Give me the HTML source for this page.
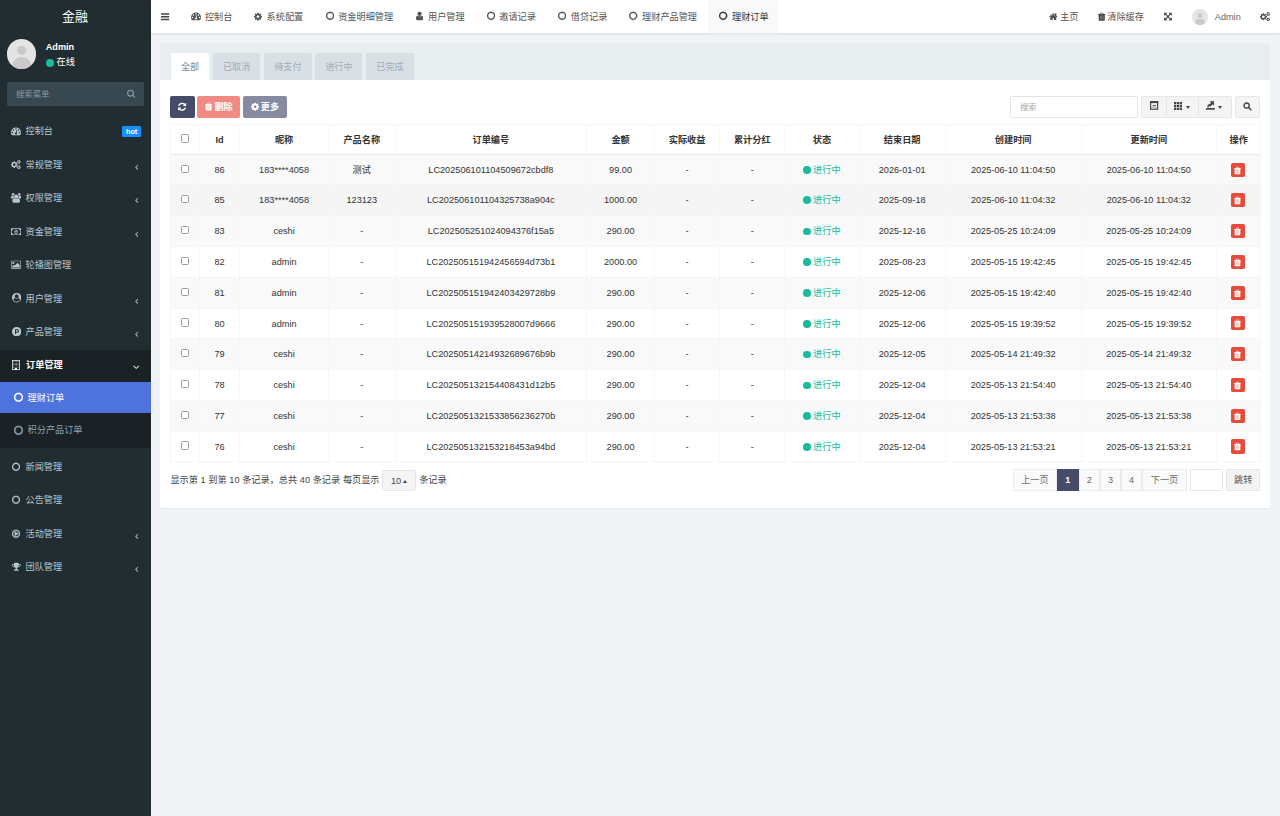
<!DOCTYPE html>
<html lang="zh-CN">
<head>
<meta charset="utf-8">
<title>金融</title>
<style>
*{box-sizing:border-box}
html,body{margin:0;padding:0}
body{width:1280px;height:816px;overflow:hidden;background:#f1f4f6;position:relative}
#page{position:absolute;left:0;top:0;width:1280px;height:816px;overflow:hidden;background:#f1f4f6;font-family:"Liberation Sans","Noto Sans CJK SC",sans-serif;font-size:9.16px;line-height:13px;color:#444}
svg{display:block}
/* sidebar */
#sidebar{position:absolute;left:0;top:0;width:150.8px;height:816px;background:#222d32;color:#b8c7ce}
#logo{position:absolute;left:0;top:0;width:150px;height:34px;line-height:33.5px;text-align:center;color:#fff;font-size:12.9px}
#avatar{position:absolute;left:6.5px;top:39.1px;width:29.5px;height:29.5px;border-radius:50%;background:#e4e4e4;overflow:hidden}
#uname{position:absolute;left:45.7px;top:41.25px;color:#fff;font-weight:bold;font-size:9.16px;line-height:13px}
#ustat{position:absolute;left:56.6px;top:55.8px;color:#fff;font-size:9.2px;line-height:13px}
#udot{position:absolute;left:45.75px;top:58.5px;width:8px;height:8px;border-radius:50%;background:#18bc9c}
#sform{position:absolute;left:6.5px;top:82px;width:137.5px;height:24px;background:#374850;border-radius:1.5px;color:#8a9aa3;font-size:8.4px;line-height:25px;padding-left:9.5px}
.mi{position:absolute;left:0;width:100%;height:33.43px;color:#b8c7ce;font-size:9.16px}
.mi .tx{position:absolute;left:25.5px;top:10.2px;line-height:13px;white-space:nowrap}
.mi.open{background:linear-gradient(to bottom,transparent 0.9px,#1a2226 0.9px);color:#fff;font-weight:bold}
.mi.open .tx{left:26px}
.sub{position:absolute;left:0;top:382.4px;width:100%;height:65.7px;background:#1a2226}
.si{position:absolute;left:0;width:100%;height:30.4px;color:#8aa4af;font-size:9.16px}
.si .tx{position:absolute;left:27.6px;top:9.2px;line-height:13px;white-space:nowrap}
.si.act{background:#4e73df;color:#fff}
#hot{position:absolute;left:122px;top:11.1px;width:19.3px;height:10.7px;background:#1890ff;border-radius:1.3px;color:#fff;font-weight:bold;font-size:7.2px;line-height:11.2px;text-align:center}
/* header */
#header{position:absolute;left:150.6px;top:0;width:1129.4px;height:33px;background:#fff;box-shadow:0 1px 3px rgba(0,21,41,.10)}
.tab{position:absolute;top:0;height:33px;color:#555;font-size:9.16px;line-height:32px;white-space:nowrap}
.tab.act{background:#f9f9f9;color:#333}
.tabt{position:absolute;top:10.5px;line-height:13px;color:#555;font-size:9.16px;white-space:nowrap}
/* panel */
#panel{position:absolute;left:160.2px;top:42.7px;width:1109.8px;height:465.5px;background:#fff;border-radius:2px;box-shadow:0 1px 1px rgba(0,0,0,.04)}
#phead{position:absolute;left:0;top:0;width:100%;height:37.1px;background:#e8edf0;border-radius:2px 2px 0 0}
.pt{position:absolute;top:10.5px;height:26.6px;line-height:29px;text-align:center;background:#d8dfe5;color:#a3adb5;font-size:9.16px;border-radius:2px 2px 0 0}
.pt.act{background:#fff;color:#7b8a8b}
.btn{position:absolute;border-radius:2px;color:#fff;font-size:9.16px;line-height:13px;white-space:nowrap;font-weight:bold}
.inp{position:absolute;border:1px solid #e4e4e4;border-radius:1.5px;background:#fff}
.bgrp{position:absolute;border:1px solid #e6e6e6;border-radius:1.5px;background:#f4f4f4;color:#444}
.bg1{position:absolute;top:-1px;height:21.4px;border-right:1px solid #e6e6e6}
.caret{position:absolute;width:0;height:0;border-left:2.6px solid transparent;border-right:2.6px solid transparent;border-top:3px solid #444}
.caret.up{border-top:0;border-bottom:3px solid #444}
/* table */
#tb{position:absolute;border-collapse:separate;border-spacing:0;table-layout:fixed;font-size:9.16px;color:#333;border-right:1px solid #f6f6f6;border-bottom:1px solid #f6f6f6}
#tb th,#tb td{border-left:1px solid #f6f6f6;border-top:1px solid #f6f6f6;text-align:center;padding:0;white-space:nowrap;overflow:hidden;position:relative}
#tb th{height:30.2px;font-weight:bold;color:#333;border-bottom:1.5px solid #ebebeb;padding-top:1.6px}
#tb td{height:30.78px;padding-top:1.2px}
#tb tbody tr:first-child td{height:29.38px;border-top:0;padding-top:2.4px}
#tb tbody tr.hov td{height:31.38px;padding-top:0.6px}
#tb tbody tr:nth-child(odd){background:#f9f9f9}
#tb tbody tr.hov{background:#f5f5f5}
.cb{display:inline-block;width:8.4px;height:8.4px;border:1px solid #9c9c9c;border-radius:1.6px;background:#fff;vertical-align:middle;position:relative;top:-1.7px}
.st{color:#18bc9c}
.dot{display:inline-block;width:7.6px;height:7.6px;border-radius:50%;background:#18bc9c;margin-right:2.2px;vertical-align:middle;position:relative;top:-0.4px}
.del{display:inline-block;position:relative;width:14px;height:14.2px;background:#e94b3a;border-radius:1.8px;vertical-align:middle;top:-0.7px;left:-0.9px}
.pg{position:absolute;top:426.3px;height:22.2px;line-height:20.4px;text-align:center;border:1px solid #ebebeb;margin-left:-1px;background:#fafafa;color:#6c6c6c}
.pg.act{background:#444c69;border-color:#444c69;color:#fff;font-weight:bold}

</style>
</head>
<body>
<div id="page">
<aside id="sidebar">
<div id="logo">金融</div>
<div id="avatar"><svg width="29.5" height="29.5" viewBox="0 0 30 30"><circle cx="15" cy="11.6" r="4.6" fill="#c9c9c9"/><ellipse cx="15" cy="27" rx="9.6" ry="8.6" fill="#c9c9c9"/></svg></div>
<div id="uname">Admin</div><div id="udot"></div><div id="ustat">在线</div>
<div id="sform">搜索菜单<svg width="8.36" height="9.00" viewBox="0 -1536 1664 1792" style="position:absolute;left:120.4px;top:7.1px"><path fill="#8a9aa3" transform="scale(1,-1)" d="M1152 704q0 185 -131.5 316.5t-316.5 131.5t-316.5 -131.5t-131.5 -316.5t131.5 -316.5t316.5 -131.5t316.5 131.5t131.5 316.5zM1664 -128q0 -52 -38 -90t-90 -38q-54 0 -90 38l-343 342q-179 -124 -399 -124q-143 0 -273.5 55.5t-225 150t-150 225t-55.5 273.5
t55.5 273.5t150 225t225 150t273.5 55.5t273.5 -55.5t225 -150t150 -225t55.5 -273.5q0 -220 -124 -399l343 -343q37 -37 37 -90z"/></svg></div>
<div class="mi" style="top:115.30px"><svg width="10.00" height="10.00" viewBox="0 -1536 1792 1792" style="position:absolute;left:11.20px;top:10.70px"><path fill="currentColor" transform="scale(1,-1)" d="M384 384q0 53 -37.5 90.5t-90.5 37.5t-90.5 -37.5t-37.5 -90.5t37.5 -90.5t90.5 -37.5t90.5 37.5t37.5 90.5zM576 832q0 53 -37.5 90.5t-90.5 37.5t-90.5 -37.5t-37.5 -90.5t37.5 -90.5t90.5 -37.5t90.5 37.5t37.5 90.5zM1004 351l101 382q6 26 -7.5 48.5t-38.5 29.5
t-48 -6.5t-30 -39.5l-101 -382q-60 -5 -107 -43.5t-63 -98.5q-20 -77 20 -146t117 -89t146 20t89 117q16 60 -6 117t-72 91zM1664 384q0 53 -37.5 90.5t-90.5 37.5t-90.5 -37.5t-37.5 -90.5t37.5 -90.5t90.5 -37.5t90.5 37.5t37.5 90.5zM1024 1024q0 53 -37.5 90.5
t-90.5 37.5t-90.5 -37.5t-37.5 -90.5t37.5 -90.5t90.5 -37.5t90.5 37.5t37.5 90.5zM1472 832q0 53 -37.5 90.5t-90.5 37.5t-90.5 -37.5t-37.5 -90.5t37.5 -90.5t90.5 -37.5t90.5 37.5t37.5 90.5zM1792 384q0 -261 -141 -483q-19 -29 -54 -29h-1402q-35 0 -54 29
q-141 221 -141 483q0 182 71 348t191 286t286 191t348 71t348 -71t286 -191t191 -286t71 -348z"/></svg><span class="tx">控制台</span>
<span id="hot">hot</span>
</div>
<div class="mi" style="top:148.73px"><svg width="9.86" height="9.20" viewBox="0 -1536 1920 1792" style="position:absolute;left:11.27px;top:11.10px"><path fill="currentColor" transform="scale(1,-1)" d="M896 640q0 106 -75 181t-181 75t-181 -75t-75 -181t75 -181t181 -75t181 75t75 181zM1664 128q0 52 -38 90t-90 38t-90 -38t-38 -90q0 -53 37.5 -90.5t90.5 -37.5t90.5 37.5t37.5 90.5zM1664 1152q0 52 -38 90t-90 38t-90 -38t-38 -90q0 -53 37.5 -90.5t90.5 -37.5
t90.5 37.5t37.5 90.5zM1280 731v-185q0 -10 -7 -19.5t-16 -10.5l-155 -24q-11 -35 -32 -76q34 -48 90 -115q7 -11 7 -20q0 -12 -7 -19q-23 -30 -82.5 -89.5t-78.5 -59.5q-11 0 -21 7l-115 90q-37 -19 -77 -31q-11 -108 -23 -155q-7 -24 -30 -24h-186q-11 0 -20 7.5t-10 17.5
l-23 153q-34 10 -75 31l-118 -89q-7 -7 -20 -7q-11 0 -21 8q-144 133 -144 160q0 9 7 19q10 14 41 53t47 61q-23 44 -35 82l-152 24q-10 1 -17 9.5t-7 19.5v185q0 10 7 19.5t16 10.5l155 24q11 35 32 76q-34 48 -90 115q-7 11 -7 20q0 12 7 20q22 30 82 89t79 59q11 0 21 -7
l115 -90q34 18 77 32q11 108 23 154q7 24 30 24h186q11 0 20 -7.5t10 -17.5l23 -153q34 -10 75 -31l118 89q8 7 20 7q11 0 21 -8q144 -133 144 -160q0 -8 -7 -19q-12 -16 -42 -54t-45 -60q23 -48 34 -82l152 -23q10 -2 17 -10.5t7 -19.5zM1920 198v-140q0 -16 -149 -31
q-12 -27 -30 -52q51 -113 51 -138q0 -4 -4 -7q-122 -71 -124 -71q-8 0 -46 47t-52 68q-20 -2 -30 -2t-30 2q-14 -21 -52 -68t-46 -47q-2 0 -124 71q-4 3 -4 7q0 25 51 138q-18 25 -30 52q-149 15 -149 31v140q0 16 149 31q13 29 30 52q-51 113 -51 138q0 4 4 7q4 2 35 20
t59 34t30 16q8 0 46 -46.5t52 -67.5q20 2 30 2t30 -2q51 71 92 112l6 2q4 0 124 -70q4 -3 4 -7q0 -25 -51 -138q17 -23 30 -52q149 -15 149 -31zM1920 1222v-140q0 -16 -149 -31q-12 -27 -30 -52q51 -113 51 -138q0 -4 -4 -7q-122 -71 -124 -71q-8 0 -46 47t-52 68
q-20 -2 -30 -2t-30 2q-14 -21 -52 -68t-46 -47q-2 0 -124 71q-4 3 -4 7q0 25 51 138q-18 25 -30 52q-149 15 -149 31v140q0 16 149 31q13 29 30 52q-51 113 -51 138q0 4 4 7q4 2 35 20t59 34t30 16q8 0 46 -46.5t52 -67.5q20 2 30 2t30 -2q51 71 92 112l6 2q4 0 124 -70
q4 -3 4 -7q0 -25 -51 -138q17 -23 30 -52q149 -15 149 -31z"/></svg><span class="tx">常规管理</span>
<svg width="3.57" height="10.00" viewBox="0 -1536 640 1792" style="position:absolute;left:134.7px;top:13.2px"><path fill="currentColor" stroke="currentColor" stroke-width="44" transform="scale(1,-1)" d="M627 992q0 -13 -10 -23l-393 -393l393 -393q10 -10 10 -23t-10 -23l-50 -50q-10 -10 -23 -10t-23 10l-466 466q-10 10 -10 23t10 23l466 466q10 10 23 10t23 -10l50 -50q10 -10 10 -23z"/></svg>
</div>
<div class="mi" style="top:182.16px"><svg width="10.39" height="9.70" viewBox="0 -1536 1920 1792" style="position:absolute;left:11.00px;top:10.85px"><path fill="currentColor" transform="scale(1,-1)" d="M593 640q-162 -5 -265 -128h-134q-82 0 -138 40.5t-56 118.5q0 353 124 353q6 0 43.5 -21t97.5 -42.5t119 -21.5q67 0 133 23q-5 -37 -5 -66q0 -139 81 -256zM1664 3q0 -120 -73 -189.5t-194 -69.5h-874q-121 0 -194 69.5t-73 189.5q0 53 3.5 103.5t14 109t26.5 108.5
t43 97.5t62 81t85.5 53.5t111.5 20q10 0 43 -21.5t73 -48t107 -48t135 -21.5t135 21.5t107 48t73 48t43 21.5q61 0 111.5 -20t85.5 -53.5t62 -81t43 -97.5t26.5 -108.5t14 -109t3.5 -103.5zM640 1280q0 -106 -75 -181t-181 -75t-181 75t-75 181t75 181t181 75t181 -75
t75 -181zM1344 896q0 -159 -112.5 -271.5t-271.5 -112.5t-271.5 112.5t-112.5 271.5t112.5 271.5t271.5 112.5t271.5 -112.5t112.5 -271.5zM1920 671q0 -78 -56 -118.5t-138 -40.5h-134q-103 123 -265 128q81 117 81 256q0 29 -5 66q66 -23 133 -23q59 0 119 21.5t97.5 42.5
t43.5 21q124 0 124 -353zM1792 1280q0 -106 -75 -181t-181 -75t-181 75t-75 181t75 181t181 75t181 -75t75 -181z"/></svg><span class="tx">权限管理</span>
<svg width="3.57" height="10.00" viewBox="0 -1536 640 1792" style="position:absolute;left:134.7px;top:13.2px"><path fill="currentColor" stroke="currentColor" stroke-width="44" transform="scale(1,-1)" d="M627 992q0 -13 -10 -23l-393 -393l393 -393q10 -10 10 -23t-10 -23l-50 -50q-10 -10 -23 -10t-23 10l-466 466q-10 10 -10 23t10 23l466 466q10 10 23 10t23 -10l50 -50q10 -10 10 -23z"/></svg>
</div>
<div class="mi" style="top:215.59px"><svg width="10.07" height="9.40" viewBox="0 -1536 1920 1792" style="position:absolute;left:11.16px;top:11.00px"><path fill="currentColor" transform="scale(1,-1)" d="M768 384h384v96h-128v448h-114l-148 -137l77 -80q42 37 55 57h2v-288h-128v-96zM1280 640q0 -70 -21 -142t-59.5 -134t-101.5 -101t-138 -39t-138 39t-101.5 101t-59.5 134t-21 142t21 142t59.5 134t101.5 101t138 39t138 -39t101.5 -101t59.5 -134t21 -142zM1792 384
v512q-106 0 -181 75t-75 181h-1152q0 -106 -75 -181t-181 -75v-512q106 0 181 -75t75 -181h1152q0 106 75 181t181 75zM1920 1216v-1152q0 -26 -19 -45t-45 -19h-1792q-26 0 -45 19t-19 45v1152q0 26 19 45t45 19h1792q26 0 45 -19t19 -45z"/></svg><span class="tx">资金管理</span>
<svg width="3.57" height="10.00" viewBox="0 -1536 640 1792" style="position:absolute;left:134.7px;top:13.2px"><path fill="currentColor" stroke="currentColor" stroke-width="44" transform="scale(1,-1)" d="M627 992q0 -13 -10 -23l-393 -393l393 -393q10 -10 10 -23t-10 -23l-50 -50q-10 -10 -23 -10t-23 10l-466 466q-10 10 -10 23t10 23l466 466q10 10 23 10t23 -10l50 -50q10 -10 10 -23z"/></svg>
</div>
<div class="mi" style="top:249.02px"><svg width="10.07" height="9.40" viewBox="0 -1536 1920 1792" style="position:absolute;left:11.16px;top:11.00px"><path fill="currentColor" transform="scale(1,-1)" d="M640 960q0 -80 -56 -136t-136 -56t-136 56t-56 136t56 136t136 56t136 -56t56 -136zM1664 576v-448h-1408v192l320 320l160 -160l512 512zM1760 1280h-1600q-13 0 -22.5 -9.5t-9.5 -22.5v-1216q0 -13 9.5 -22.5t22.5 -9.5h1600q13 0 22.5 9.5t9.5 22.5v1216
q0 13 -9.5 22.5t-22.5 9.5zM1920 1248v-1216q0 -66 -47 -113t-113 -47h-1600q-66 0 -113 47t-47 113v1216q0 66 47 113t113 47h1600q66 0 113 -47t47 -113z"/></svg><span class="tx">轮播图管理</span>
</div>
<div class="mi" style="top:282.45px"><svg width="9.40" height="9.40" viewBox="0 -1536 1792 1792" style="position:absolute;left:11.50px;top:11.00px"><path fill="currentColor" transform="scale(1,-1)" d="M1523 197q-22 155 -87.5 257.5t-184.5 118.5q-67 -74 -159.5 -115.5t-195.5 -41.5t-195.5 41.5t-159.5 115.5q-119 -16 -184.5 -118.5t-87.5 -257.5q106 -150 271 -237.5t356 -87.5t356 87.5t271 237.5zM1280 896q0 159 -112.5 271.5t-271.5 112.5t-271.5 -112.5
t-112.5 -271.5t112.5 -271.5t271.5 -112.5t271.5 112.5t112.5 271.5zM1792 640q0 -182 -71 -347.5t-190.5 -286t-285.5 -191.5t-349 -71q-182 0 -348 71t-286 191t-191 286t-71 348t71 348t191 286t286 191t348 71t348 -71t286 -191t191 -286t71 -348z"/></svg><span class="tx">用户管理</span>
<svg width="3.57" height="10.00" viewBox="0 -1536 640 1792" style="position:absolute;left:134.7px;top:13.2px"><path fill="currentColor" stroke="currentColor" stroke-width="44" transform="scale(1,-1)" d="M627 992q0 -13 -10 -23l-393 -393l393 -393q10 -10 10 -23t-10 -23l-50 -50q-10 -10 -23 -10t-23 10l-466 466q-10 10 -10 23t10 23l466 466q10 10 23 10t23 -10l50 -50q10 -10 10 -23z"/></svg>
</div>
<div class="mi" style="top:315.88px"><svg width="9.40" height="9.40" viewBox="0 -1536 1792 1792" style="position:absolute;left:11.50px;top:11.00px"><path fill="currentColor" transform="scale(1,-1)" d="M1150 774q0 -56 -39.5 -95t-95.5 -39h-253v269h253q56 0 95.5 -39.5t39.5 -95.5zM1329 774q0 130 -91.5 222t-222.5 92h-433v-896h180v269h253q130 0 222 91.5t92 221.5zM1792 640q0 -182 -71 -348t-191 -286t-286 -191t-348 -71t-348 71t-286 191t-191 286t-71 348
t71 348t191 286t286 191t348 71t348 -71t286 -191t191 -286t71 -348z"/></svg><span class="tx">产品管理</span>
<svg width="3.57" height="10.00" viewBox="0 -1536 640 1792" style="position:absolute;left:134.7px;top:13.2px"><path fill="currentColor" stroke="currentColor" stroke-width="44" transform="scale(1,-1)" d="M627 992q0 -13 -10 -23l-393 -393l393 -393q10 -10 10 -23t-10 -23l-50 -50q-10 -10 -23 -10t-23 10l-466 466q-10 10 -10 23t10 23l466 466q10 10 23 10t23 -10l50 -50q10 -10 10 -23z"/></svg>
</div>
<div class="mi open" style="top:349.31px"><svg width="7.78" height="9.90" viewBox="0 -1536 1408 1792" style="position:absolute;left:12.11px;top:10.75px"><path fill="currentColor" transform="scale(1,-1)" d="M384 224v-64q0 -13 -9.5 -22.5t-22.5 -9.5h-64q-13 0 -22.5 9.5t-9.5 22.5v64q0 13 9.5 22.5t22.5 9.5h64q13 0 22.5 -9.5t9.5 -22.5zM384 480v-64q0 -13 -9.5 -22.5t-22.5 -9.5h-64q-13 0 -22.5 9.5t-9.5 22.5v64q0 13 9.5 22.5t22.5 9.5h64q13 0 22.5 -9.5t9.5 -22.5z
M640 480v-64q0 -13 -9.5 -22.5t-22.5 -9.5h-64q-13 0 -22.5 9.5t-9.5 22.5v64q0 13 9.5 22.5t22.5 9.5h64q13 0 22.5 -9.5t9.5 -22.5zM384 736v-64q0 -13 -9.5 -22.5t-22.5 -9.5h-64q-13 0 -22.5 9.5t-9.5 22.5v64q0 13 9.5 22.5t22.5 9.5h64q13 0 22.5 -9.5t9.5 -22.5z
M1152 224v-64q0 -13 -9.5 -22.5t-22.5 -9.5h-64q-13 0 -22.5 9.5t-9.5 22.5v64q0 13 9.5 22.5t22.5 9.5h64q13 0 22.5 -9.5t9.5 -22.5zM896 480v-64q0 -13 -9.5 -22.5t-22.5 -9.5h-64q-13 0 -22.5 9.5t-9.5 22.5v64q0 13 9.5 22.5t22.5 9.5h64q13 0 22.5 -9.5t9.5 -22.5z
M640 736v-64q0 -13 -9.5 -22.5t-22.5 -9.5h-64q-13 0 -22.5 9.5t-9.5 22.5v64q0 13 9.5 22.5t22.5 9.5h64q13 0 22.5 -9.5t9.5 -22.5zM384 992v-64q0 -13 -9.5 -22.5t-22.5 -9.5h-64q-13 0 -22.5 9.5t-9.5 22.5v64q0 13 9.5 22.5t22.5 9.5h64q13 0 22.5 -9.5t9.5 -22.5z
M1152 480v-64q0 -13 -9.5 -22.5t-22.5 -9.5h-64q-13 0 -22.5 9.5t-9.5 22.5v64q0 13 9.5 22.5t22.5 9.5h64q13 0 22.5 -9.5t9.5 -22.5zM896 736v-64q0 -13 -9.5 -22.5t-22.5 -9.5h-64q-13 0 -22.5 9.5t-9.5 22.5v64q0 13 9.5 22.5t22.5 9.5h64q13 0 22.5 -9.5t9.5 -22.5z
M640 992v-64q0 -13 -9.5 -22.5t-22.5 -9.5h-64q-13 0 -22.5 9.5t-9.5 22.5v64q0 13 9.5 22.5t22.5 9.5h64q13 0 22.5 -9.5t9.5 -22.5zM384 1248v-64q0 -13 -9.5 -22.5t-22.5 -9.5h-64q-13 0 -22.5 9.5t-9.5 22.5v64q0 13 9.5 22.5t22.5 9.5h64q13 0 22.5 -9.5t9.5 -22.5z
M1152 736v-64q0 -13 -9.5 -22.5t-22.5 -9.5h-64q-13 0 -22.5 9.5t-9.5 22.5v64q0 13 9.5 22.5t22.5 9.5h64q13 0 22.5 -9.5t9.5 -22.5zM896 992v-64q0 -13 -9.5 -22.5t-22.5 -9.5h-64q-13 0 -22.5 9.5t-9.5 22.5v64q0 13 9.5 22.5t22.5 9.5h64q13 0 22.5 -9.5t9.5 -22.5z
M640 1248v-64q0 -13 -9.5 -22.5t-22.5 -9.5h-64q-13 0 -22.5 9.5t-9.5 22.5v64q0 13 9.5 22.5t22.5 9.5h64q13 0 22.5 -9.5t9.5 -22.5zM1152 992v-64q0 -13 -9.5 -22.5t-22.5 -9.5h-64q-13 0 -22.5 9.5t-9.5 22.5v64q0 13 9.5 22.5t22.5 9.5h64q13 0 22.5 -9.5t9.5 -22.5z
M896 1248v-64q0 -13 -9.5 -22.5t-22.5 -9.5h-64q-13 0 -22.5 9.5t-9.5 22.5v64q0 13 9.5 22.5t22.5 9.5h64q13 0 22.5 -9.5t9.5 -22.5zM1152 1248v-64q0 -13 -9.5 -22.5t-22.5 -9.5h-64q-13 0 -22.5 9.5t-9.5 22.5v64q0 13 9.5 22.5t22.5 9.5h64q13 0 22.5 -9.5t9.5 -22.5z
M896 -128h384v1536h-1152v-1536h384v224q0 13 9.5 22.5t22.5 9.5h320q13 0 22.5 -9.5t9.5 -22.5v-224zM1408 1472v-1664q0 -26 -19 -45t-45 -19h-1280q-26 0 -45 19t-19 45v1664q0 26 19 45t45 19h1280q26 0 45 -19t19 -45z"/></svg><span class="tx">订单管理</span>
<svg width="6.43" height="10.00" viewBox="0 -1536 1152 1792" style="position:absolute;left:133.3px;top:13.2px"><path fill="currentColor" stroke="currentColor" stroke-width="44" transform="scale(1,-1)" d="M1075 800q0 -13 -10 -23l-466 -466q-10 -10 -23 -10t-23 10l-466 466q-10 10 -10 23t10 23l50 50q10 10 23 10t23 -10l393 -393l393 393q10 10 23 10t23 -10l50 -50q10 -10 10 -23z"/></svg>
</div>
<div class="sub">
<div class="si act" style="top:0"><svg width="9.00" height="10.50" viewBox="0 -1536 1536 1792" style="position:absolute;left:13.7px;top:9.5px"><path fill="currentColor" stroke="currentColor" stroke-width="44" transform="scale(1,-1)" d="M768 1184q-148 0 -273 -73t-198 -198t-73 -273t73 -273t198 -198t273 -73t273 73t198 198t73 273t-73 273t-198 198t-273 73zM1536 640q0 -209 -103 -385.5t-279.5 -279.5t-385.5 -103t-385.5 103t-279.5 279.5t-103 385.5t103 385.5t279.5 279.5t385.5 103t385.5 -103
t279.5 -279.5t103 -385.5z"/></svg><span class="tx">理财订单</span></div>
<div class="si" style="top:32.8px"><svg width="9.00" height="10.50" viewBox="0 -1536 1536 1792" style="position:absolute;left:13.7px;top:9.5px"><path fill="currentColor" stroke="currentColor" stroke-width="44" transform="scale(1,-1)" d="M768 1184q-148 0 -273 -73t-198 -198t-73 -273t73 -273t198 -198t273 -73t273 73t198 198t73 273t-73 273t-198 198t-273 73zM1536 640q0 -209 -103 -385.5t-279.5 -279.5t-385.5 -103t-385.5 103t-279.5 279.5t-103 385.5t103 385.5t279.5 279.5t385.5 103t385.5 -103
t279.5 -279.5t103 -385.5z"/></svg><span class="tx">积分产品订单</span></div>
</div>
<div class="mi" style="top:450.70px"><svg width="8.06" height="9.40" viewBox="0 -1536 1536 1792" style="position:absolute;left:12.17px;top:11.0px"><path fill="currentColor" stroke="currentColor" stroke-width="44" transform="scale(1,-1)" d="M768 1184q-148 0 -273 -73t-198 -198t-73 -273t73 -273t198 -198t273 -73t273 73t198 198t73 273t-73 273t-198 198t-273 73zM1536 640q0 -209 -103 -385.5t-279.5 -279.5t-385.5 -103t-385.5 103t-279.5 279.5t-103 385.5t103 385.5t279.5 279.5t385.5 103t385.5 -103
t279.5 -279.5t103 -385.5z"/></svg><span class="tx">新闻管理</span>
</div>
<div class="mi" style="top:484.13px"><svg width="8.06" height="9.40" viewBox="0 -1536 1536 1792" style="position:absolute;left:12.17px;top:11.0px"><path fill="currentColor" stroke="currentColor" stroke-width="44" transform="scale(1,-1)" d="M768 1184q-148 0 -273 -73t-198 -198t-73 -273t73 -273t198 -198t273 -73t273 73t198 198t73 273t-73 273t-198 198t-273 73zM1536 640q0 -209 -103 -385.5t-279.5 -279.5t-385.5 -103t-385.5 103t-279.5 279.5t-103 385.5t103 385.5t279.5 279.5t385.5 103t385.5 -103
t279.5 -279.5t103 -385.5z"/></svg><span class="tx">公告管理</span>
</div>
<div class="mi" style="top:517.56px"><svg width="8.06" height="9.40" viewBox="0 -1536 1536 1792" style="position:absolute;left:12.17px;top:11.0px"><path fill="currentColor" stroke="currentColor" stroke-width="44" transform="scale(1,-1)" d="M1184 640q0 -37 -32 -55l-544 -320q-15 -9 -32 -9q-16 0 -32 8q-32 19 -32 56v640q0 37 32 56q33 18 64 -1l544 -320q32 -18 32 -55zM1312 640q0 148 -73 273t-198 198t-273 73t-273 -73t-198 -198t-73 -273t73 -273t198 -198t273 -73t273 73t198 198t73 273zM1536 640
q0 -209 -103 -385.5t-279.5 -279.5t-385.5 -103t-385.5 103t-279.5 279.5t-103 385.5t103 385.5t279.5 279.5t385.5 103t385.5 -103t279.5 -279.5t103 -385.5z"/></svg><span class="tx">活动管理</span>
<svg width="3.57" height="10.00" viewBox="0 -1536 640 1792" style="position:absolute;left:134.7px;top:13.2px"><path fill="currentColor" stroke="currentColor" stroke-width="44" transform="scale(1,-1)" d="M627 992q0 -13 -10 -23l-393 -393l393 -393q10 -10 10 -23t-10 -23l-50 -50q-10 -10 -23 -10t-23 10l-466 466q-10 10 -10 23t10 23l466 466q10 10 23 10t23 -10l50 -50q10 -10 10 -23z"/></svg>
</div>
<div class="mi" style="top:550.99px"><svg width="8.73" height="9.40" viewBox="0 -1536 1664 1792" style="position:absolute;left:11.84px;top:11.0px"><path fill="currentColor" transform="scale(1,-1)" d="M458 653q-74 162 -74 371h-256v-96q0 -78 94.5 -162t235.5 -113zM1536 928v96h-256q0 -209 -74 -371q141 29 235.5 113t94.5 162zM1664 1056v-128q0 -71 -41.5 -143t-112 -130t-173 -97.5t-215.5 -44.5q-42 -54 -95 -95q-38 -34 -52.5 -72.5t-14.5 -89.5q0 -54 30.5 -91
t97.5 -37q75 0 133.5 -45.5t58.5 -114.5v-64q0 -14 -9 -23t-23 -9h-832q-14 0 -23 9t-9 23v64q0 69 58.5 114.5t133.5 45.5q67 0 97.5 37t30.5 91q0 51 -14.5 89.5t-52.5 72.5q-53 41 -95 95q-113 5 -215.5 44.5t-173 97.5t-112 130t-41.5 143v128q0 40 28 68t68 28h288v96
q0 66 47 113t113 47h576q66 0 113 -47t47 -113v-96h288q40 0 68 -28t28 -68z"/></svg><span class="tx">团队管理</span>
<svg width="3.57" height="10.00" viewBox="0 -1536 640 1792" style="position:absolute;left:134.7px;top:13.2px"><path fill="currentColor" stroke="currentColor" stroke-width="44" transform="scale(1,-1)" d="M627 992q0 -13 -10 -23l-393 -393l393 -393q10 -10 10 -23t-10 -23l-50 -50q-10 -10 -23 -10t-23 10l-466 466q-10 10 -10 23t10 23l466 466q10 10 23 10t23 -10l50 -50q10 -10 10 -23z"/></svg>
</div>
</aside>
<header id="header">
<svg width="8.23" height="9.60" viewBox="0 -1536 1536 1792" style="position:absolute;left:10.7px;top:11.9px"><path fill="#444" transform="scale(1,-1)" d="M1536 192v-128q0 -26 -19 -45t-45 -19h-1408q-26 0 -45 19t-19 45v128q0 26 19 45t45 19h1408q26 0 45 -19t19 -45zM1536 704v-128q0 -26 -19 -45t-45 -19h-1408q-26 0 -45 19t-19 45v128q0 26 19 45t45 19h1408q26 0 45 -19t19 -45zM1536 1216v-128q0 -26 -19 -45
t-45 -19h-1408q-26 0 -45 19t-19 45v128q0 26 19 45t45 19h1408q26 0 45 -19t19 -45z"/></svg>
<div class="tab act" style="left:557.3px;width:70.7px"></div>
<svg width="10.00" height="10.00" viewBox="0 -1536 1792 1792" style="position:absolute;left:40.80px;top:11.40px"><path fill="#555" transform="scale(1,-1)" d="M384 384q0 53 -37.5 90.5t-90.5 37.5t-90.5 -37.5t-37.5 -90.5t37.5 -90.5t90.5 -37.5t90.5 37.5t37.5 90.5zM576 832q0 53 -37.5 90.5t-90.5 37.5t-90.5 -37.5t-37.5 -90.5t37.5 -90.5t90.5 -37.5t90.5 37.5t37.5 90.5zM1004 351l101 382q6 26 -7.5 48.5t-38.5 29.5
t-48 -6.5t-30 -39.5l-101 -382q-60 -5 -107 -43.5t-63 -98.5q-20 -77 20 -146t117 -89t146 20t89 117q16 60 -6 117t-72 91zM1664 384q0 53 -37.5 90.5t-90.5 37.5t-90.5 -37.5t-37.5 -90.5t37.5 -90.5t90.5 -37.5t90.5 37.5t37.5 90.5zM1024 1024q0 53 -37.5 90.5
t-90.5 37.5t-90.5 -37.5t-37.5 -90.5t37.5 -90.5t90.5 -37.5t90.5 37.5t37.5 90.5zM1472 832q0 53 -37.5 90.5t-90.5 37.5t-90.5 -37.5t-37.5 -90.5t37.5 -90.5t90.5 -37.5t90.5 37.5t37.5 90.5zM1792 384q0 -261 -141 -483q-19 -29 -54 -29h-1402q-35 0 -54 29
q-141 221 -141 483q0 182 71 348t191 286t286 191t348 71t348 -71t286 -191t191 -286t71 -348z"/></svg>
<span class="tabt" style="left:54.30px;color:#555">控制台</span>
<svg width="7.97" height="9.30" viewBox="0 -1536 1536 1792" style="position:absolute;left:103.51px;top:11.75px"><path fill="#555" transform="scale(1,-1)" d="M1024 640q0 106 -75 181t-181 75t-181 -75t-75 -181t75 -181t181 -75t181 75t75 181zM1536 749v-222q0 -12 -8 -23t-20 -13l-185 -28q-19 -54 -39 -91q35 -50 107 -138q10 -12 10 -25t-9 -23q-27 -37 -99 -108t-94 -71q-12 0 -26 9l-138 108q-44 -23 -91 -38
q-16 -136 -29 -186q-7 -28 -36 -28h-222q-14 0 -24.5 8.5t-11.5 21.5l-28 184q-49 16 -90 37l-141 -107q-10 -9 -25 -9q-14 0 -25 11q-126 114 -165 168q-7 10 -7 23q0 12 8 23q15 21 51 66.5t54 70.5q-27 50 -41 99l-183 27q-13 2 -21 12.5t-8 23.5v222q0 12 8 23t19 13
l186 28q14 46 39 92q-40 57 -107 138q-10 12 -10 24q0 10 9 23q26 36 98.5 107.5t94.5 71.5q13 0 26 -10l138 -107q44 23 91 38q16 136 29 186q7 28 36 28h222q14 0 24.5 -8.5t11.5 -21.5l28 -184q49 -16 90 -37l142 107q9 9 24 9q13 0 25 -10q129 -119 165 -170q7 -8 7 -22
q0 -12 -8 -23q-15 -21 -51 -66.5t-54 -70.5q26 -50 41 -98l183 -28q13 -2 21 -12.5t8 -23.5z"/></svg>
<span class="tabt" style="left:116.00px;color:#555">系统配置</span>
<svg width="8.23" height="9.60" viewBox="0 -1536 1536 1792" style="position:absolute;left:174.99px;top:11.00px"><path fill="#555" stroke="#555" stroke-width="44" transform="scale(1,-1)" d="M768 1184q-148 0 -273 -73t-198 -198t-73 -273t73 -273t198 -198t273 -73t273 73t198 198t73 273t-73 273t-198 198t-273 73zM1536 640q0 -209 -103 -385.5t-279.5 -279.5t-385.5 -103t-385.5 103t-279.5 279.5t-103 385.5t103 385.5t279.5 279.5t385.5 103t385.5 -103
t279.5 -279.5t103 -385.5z"/></svg>
<span class="tabt" style="left:187.60px;color:#555">资金明细管理</span>
<svg width="7.14" height="10.00" viewBox="0 -1536 1280 1792" style="position:absolute;left:265.33px;top:11.40px"><path fill="#555" transform="scale(1,-1)" d="M1280 137q0 -109 -62.5 -187t-150.5 -78h-854q-88 0 -150.5 78t-62.5 187q0 85 8.5 160.5t31.5 152t58.5 131t94 89t134.5 34.5q131 -128 313 -128t313 128q76 0 134.5 -34.5t94 -89t58.5 -131t31.5 -152t8.5 -160.5zM1024 1024q0 -159 -112.5 -271.5t-271.5 -112.5
t-271.5 112.5t-112.5 271.5t112.5 271.5t271.5 112.5t271.5 -112.5t112.5 -271.5z"/></svg>
<span class="tabt" style="left:277.40px;color:#555">用户管理</span>
<svg width="8.23" height="9.60" viewBox="0 -1536 1536 1792" style="position:absolute;left:336.09px;top:11.00px"><path fill="#555" stroke="#555" stroke-width="44" transform="scale(1,-1)" d="M768 1184q-148 0 -273 -73t-198 -198t-73 -273t73 -273t198 -198t273 -73t273 73t198 198t73 273t-73 273t-198 198t-273 73zM1536 640q0 -209 -103 -385.5t-279.5 -279.5t-385.5 -103t-385.5 103t-279.5 279.5t-103 385.5t103 385.5t279.5 279.5t385.5 103t385.5 -103
t279.5 -279.5t103 -385.5z"/></svg>
<span class="tabt" style="left:348.70px;color:#555">邀请记录</span>
<svg width="8.23" height="9.60" viewBox="0 -1536 1536 1792" style="position:absolute;left:407.59px;top:11.00px"><path fill="#555" stroke="#555" stroke-width="44" transform="scale(1,-1)" d="M768 1184q-148 0 -273 -73t-198 -198t-73 -273t73 -273t198 -198t273 -73t273 73t198 198t73 273t-73 273t-198 198t-273 73zM1536 640q0 -209 -103 -385.5t-279.5 -279.5t-385.5 -103t-385.5 103t-279.5 279.5t-103 385.5t103 385.5t279.5 279.5t385.5 103t385.5 -103
t279.5 -279.5t103 -385.5z"/></svg>
<span class="tabt" style="left:420.20px;color:#555">借贷记录</span>
<svg width="8.23" height="9.60" viewBox="0 -1536 1536 1792" style="position:absolute;left:478.89px;top:11.00px"><path fill="#555" stroke="#555" stroke-width="44" transform="scale(1,-1)" d="M768 1184q-148 0 -273 -73t-198 -198t-73 -273t73 -273t198 -198t273 -73t273 73t198 198t73 273t-73 273t-198 198t-273 73zM1536 640q0 -209 -103 -385.5t-279.5 -279.5t-385.5 -103t-385.5 103t-279.5 279.5t-103 385.5t103 385.5t279.5 279.5t385.5 103t385.5 -103
t279.5 -279.5t103 -385.5z"/></svg>
<span class="tabt" style="left:491.50px;color:#555">理财产品管理</span>
<svg width="8.23" height="9.60" viewBox="0 -1536 1536 1792" style="position:absolute;left:568.79px;top:11.00px"><path fill="#333" stroke="#333" stroke-width="44" transform="scale(1,-1)" d="M768 1184q-148 0 -273 -73t-198 -198t-73 -273t73 -273t198 -198t273 -73t273 73t198 198t73 273t-73 273t-198 198t-273 73zM1536 640q0 -209 -103 -385.5t-279.5 -279.5t-385.5 -103t-385.5 103t-279.5 279.5t-103 385.5t103 385.5t279.5 279.5t385.5 103t385.5 -103
t279.5 -279.5t103 -385.5z"/></svg>
<span class="tabt" style="left:581.40px;color:#333">理财订单</span>
<svg width="8.64" height="9.30" viewBox="0 -1536 1664 1792" style="position:absolute;left:898.4px;top:11.8px"><path fill="#4a4a4a" transform="scale(1,-1)" d="M1408 544v-480q0 -26 -19 -45t-45 -19h-384v384h-256v-384h-384q-26 0 -45 19t-19 45v480q0 1 0.5 3t0.5 3l575 474l575 -474q1 -2 1 -6zM1631 613l-62 -74q-8 -9 -21 -11h-3q-13 0 -21 7l-692 577l-692 -577q-12 -8 -24 -7q-13 2 -21 11l-62 74q-8 10 -7 23.5t11 21.5
l719 599q32 26 76 26t76 -26l244 -204v195q0 14 9 23t23 9h192q14 0 23 -9t9 -23v-408l219 -182q10 -8 11 -21.5t-7 -23.5z"/></svg><span class="tabt" style="left:909.6px">主页</span>
<svg width="7.46" height="9.50" viewBox="0 -1536 1408 1792" style="position:absolute;left:947.6px;top:11.8px"><rect x="256" y="-1024" width="896" height="1024" fill="#444" fill-opacity="0.6"/><path fill="#444" transform="scale(1,-1)" d="M512 160v704q0 14 -9 23t-23 9h-64q-14 0 -23 -9t-9 -23v-704q0 -14 9 -23t23 -9h64q14 0 23 9t9 23zM768 160v704q0 14 -9 23t-23 9h-64q-14 0 -23 -9t-9 -23v-704q0 -14 9 -23t23 -9h64q14 0 23 9t9 23zM1024 160v704q0 14 -9 23t-23 9h-64q-14 0 -23 -9t-9 -23v-704
q0 -14 9 -23t23 -9h64q14 0 23 9t9 23zM480 1152h448l-48 117q-7 9 -17 11h-317q-10 -2 -17 -11zM1408 1120v-64q0 -14 -9 -23t-23 -9h-96v-948q0 -83 -47 -143.5t-113 -60.5h-832q-66 0 -113 58.5t-47 141.5v952h-96q-14 0 -23 9t-9 23v64q0 14 9 23t23 9h309l70 167
q15 37 54 63t79 26h320q40 0 79 -26t54 -63l70 -167h309q14 0 23 -9t9 -23z"/></svg><span class="tabt" style="left:956.7px">清除缓存</span>
<svg width="7.89" height="9.20" viewBox="0 -1536 1536 1792" style="position:absolute;left:1013.6px;top:11.9px"><path fill="#4a4a4a" transform="scale(1,-1)" d="M1283 995l-355 -355l355 -355l144 144q29 31 70 14q39 -17 39 -59v-448q0 -26 -19 -45t-45 -19h-448q-42 0 -59 40q-17 39 14 69l144 144l-355 355l-355 -355l144 -144q31 -30 14 -69q-17 -40 -59 -40h-448q-26 0 -45 19t-19 45v448q0 42 40 59q39 17 69 -14l144 -144
l355 355l-355 355l-144 -144q-19 -19 -45 -19q-12 0 -24 5q-40 17 -40 59v448q0 26 19 45t45 19h448q42 0 59 -40q17 -39 -14 -69l-144 -144l355 -355l355 355l-144 144q-31 30 -14 69q17 40 59 40h448q26 0 45 -19t19 -45v-448q0 -42 -39 -59q-13 -5 -25 -5q-26 0 -45 19z
"/></svg>
<div style="position:absolute;left:1041.4px;top:8.5px;width:16px;height:16px;border-radius:50%;background:#e4e4e4;overflow:hidden"><svg width="16" height="16" viewBox="0 0 30 30"><circle cx="15" cy="11.6" r="4.6" fill="#c9c9c9"/><ellipse cx="15" cy="27" rx="9.6" ry="8.6" fill="#c9c9c9"/></svg></div>
<span class="tabt" style="left:1064.2px;color:#666">Admin</span>
<svg width="10.18" height="9.50" viewBox="0 -1536 1920 1792" style="position:absolute;left:1109.8px;top:11.7px"><path fill="#4a4a4a" transform="scale(1,-1)" d="M896 640q0 106 -75 181t-181 75t-181 -75t-75 -181t75 -181t181 -75t181 75t75 181zM1664 128q0 52 -38 90t-90 38t-90 -38t-38 -90q0 -53 37.5 -90.5t90.5 -37.5t90.5 37.5t37.5 90.5zM1664 1152q0 52 -38 90t-90 38t-90 -38t-38 -90q0 -53 37.5 -90.5t90.5 -37.5
t90.5 37.5t37.5 90.5zM1280 731v-185q0 -10 -7 -19.5t-16 -10.5l-155 -24q-11 -35 -32 -76q34 -48 90 -115q7 -11 7 -20q0 -12 -7 -19q-23 -30 -82.5 -89.5t-78.5 -59.5q-11 0 -21 7l-115 90q-37 -19 -77 -31q-11 -108 -23 -155q-7 -24 -30 -24h-186q-11 0 -20 7.5t-10 17.5
l-23 153q-34 10 -75 31l-118 -89q-7 -7 -20 -7q-11 0 -21 8q-144 133 -144 160q0 9 7 19q10 14 41 53t47 61q-23 44 -35 82l-152 24q-10 1 -17 9.5t-7 19.5v185q0 10 7 19.5t16 10.5l155 24q11 35 32 76q-34 48 -90 115q-7 11 -7 20q0 12 7 20q22 30 82 89t79 59q11 0 21 -7
l115 -90q34 18 77 32q11 108 23 154q7 24 30 24h186q11 0 20 -7.5t10 -17.5l23 -153q34 -10 75 -31l118 89q8 7 20 7q11 0 21 -8q144 -133 144 -160q0 -8 -7 -19q-12 -16 -42 -54t-45 -60q23 -48 34 -82l152 -23q10 -2 17 -10.5t7 -19.5zM1920 198v-140q0 -16 -149 -31
q-12 -27 -30 -52q51 -113 51 -138q0 -4 -4 -7q-122 -71 -124 -71q-8 0 -46 47t-52 68q-20 -2 -30 -2t-30 2q-14 -21 -52 -68t-46 -47q-2 0 -124 71q-4 3 -4 7q0 25 51 138q-18 25 -30 52q-149 15 -149 31v140q0 16 149 31q13 29 30 52q-51 113 -51 138q0 4 4 7q4 2 35 20
t59 34t30 16q8 0 46 -46.5t52 -67.5q20 2 30 2t30 -2q51 71 92 112l6 2q4 0 124 -70q4 -3 4 -7q0 -25 -51 -138q17 -23 30 -52q149 -15 149 -31zM1920 1222v-140q0 -16 -149 -31q-12 -27 -30 -52q51 -113 51 -138q0 -4 -4 -7q-122 -71 -124 -71q-8 0 -46 47t-52 68
q-20 -2 -30 -2t-30 2q-14 -21 -52 -68t-46 -47q-2 0 -124 71q-4 3 -4 7q0 25 51 138q-18 25 -30 52q-149 15 -149 31v140q0 16 149 31q13 29 30 52q-51 113 -51 138q0 4 4 7q4 2 35 20t59 34t30 16q8 0 46 -46.5t52 -67.5q20 2 30 2t30 -2q51 71 92 112l6 2q4 0 124 -70
q4 -3 4 -7q0 -25 -51 -138q17 -23 30 -52q149 -15 149 -31z"/></svg>
</header>
<div id="panel"><div id="phead">
<div class="pt act" style="left:10.7px;width:38.5px">全部</div>
<div class="pt" style="left:53.0px;width:47px">已取消</div>
<div class="pt" style="left:104.0px;width:47.4px">待支付</div>
<div class="pt" style="left:155.1px;width:47.2px">进行中</div>
<div class="pt" style="left:206.0px;width:47.6px">已完成</div>
</div>
<div class="btn" style="left:10.0px;top:53.5px;width:24.4px;height:21.4px;background:#444c69"><svg width="8.14" height="9.50" viewBox="0 -1536 1536 1792" style="position:absolute;left:8.3px;top:6.0px"><path fill="#fff" transform="scale(1,-1)" d="M1511 480q0 -5 -1 -7q-64 -268 -268 -434.5t-478 -166.5q-146 0 -282.5 55t-243.5 157l-129 -129q-19 -19 -45 -19t-45 19t-19 45v448q0 26 19 45t45 19h448q26 0 45 -19t19 -45t-19 -45l-137 -137q71 -66 161 -102t187 -36q134 0 250 65t186 179q11 17 53 117
q8 23 30 23h192q13 0 22.5 -9.5t9.5 -22.5zM1536 1280v-448q0 -26 -19 -45t-45 -19h-448q-26 0 -45 19t-19 45t19 45l138 138q-148 137 -349 137q-134 0 -250 -65t-186 -179q-11 -17 -53 -117q-8 -23 -30 -23h-199q-13 0 -22.5 9.5t-9.5 22.5v7q65 268 270 434.5t480 166.5
q146 0 284 -55.5t245 -156.5l130 129q19 19 45 19t45 -19t19 -45z"/></svg></div>
<div class="btn" style="left:37.0px;top:53.5px;width:43.1px;height:21.4px;background:#f18a82"><svg width="7.23" height="9.20" viewBox="0 -1536 1408 1792" style="position:absolute;left:7.9px;top:6.0px"><rect x="256" y="-1024" width="896" height="1024" fill="#fff" fill-opacity="0.6"/><path fill="#fff" transform="scale(1,-1)" d="M512 160v704q0 14 -9 23t-23 9h-64q-14 0 -23 -9t-9 -23v-704q0 -14 9 -23t23 -9h64q14 0 23 9t9 23zM768 160v704q0 14 -9 23t-23 9h-64q-14 0 -23 -9t-9 -23v-704q0 -14 9 -23t23 -9h64q14 0 23 9t9 23zM1024 160v704q0 14 -9 23t-23 9h-64q-14 0 -23 -9t-9 -23v-704
q0 -14 9 -23t23 -9h64q14 0 23 9t9 23zM480 1152h448l-48 117q-7 9 -17 11h-317q-10 -2 -17 -11zM1408 1120v-64q0 -14 -9 -23t-23 -9h-96v-948q0 -83 -47 -143.5t-113 -60.5h-832q-66 0 -113 58.5t-47 141.5v952h-96q-14 0 -23 9t-9 23v64q0 14 9 23t23 9h309l70 167
q15 37 54 63t79 26h320q40 0 79 -26t54 -63l70 -167h309q14 0 23 -9t9 -23z"/></svg><span style="position:absolute;left:17.2px;top:4.8px">删除</span></div>
<div class="btn" style="left:83.1px;top:53.5px;width:43.7px;height:21.4px;background:#878ba1"><svg width="8.14" height="9.50" viewBox="0 -1536 1536 1792" style="position:absolute;left:7.8px;top:5.9px"><path fill="#fff" transform="scale(1,-1)" d="M1024 640q0 106 -75 181t-181 75t-181 -75t-75 -181t75 -181t181 -75t181 75t75 181zM1536 749v-222q0 -12 -8 -23t-20 -13l-185 -28q-19 -54 -39 -91q35 -50 107 -138q10 -12 10 -25t-9 -23q-27 -37 -99 -108t-94 -71q-12 0 -26 9l-138 108q-44 -23 -91 -38
q-16 -136 -29 -186q-7 -28 -36 -28h-222q-14 0 -24.5 8.5t-11.5 21.5l-28 184q-49 16 -90 37l-141 -107q-10 -9 -25 -9q-14 0 -25 11q-126 114 -165 168q-7 10 -7 23q0 12 8 23q15 21 51 66.5t54 70.5q-27 50 -41 99l-183 27q-13 2 -21 12.5t-8 23.5v222q0 12 8 23t19 13
l186 28q14 46 39 92q-40 57 -107 138q-10 12 -10 24q0 10 9 23q26 36 98.5 107.5t94.5 71.5q13 0 26 -10l138 -107q44 23 91 38q16 136 29 186q7 28 36 28h222q14 0 24.5 -8.5t11.5 -21.5l28 -184q49 -16 90 -37l142 107q9 9 24 9q13 0 25 -10q129 -119 165 -170q7 -8 7 -22
q0 -12 -8 -23q-15 -21 -51 -66.5t-54 -70.5q26 -50 41 -98l183 -28q13 -2 21 -12.5t8 -23.5z"/></svg><span style="position:absolute;left:17.5px;top:4.8px">更多</span></div>
<div class="inp" style="left:849.7px;top:53.5px;width:128.6px;height:21.4px;padding-left:9px;line-height:20px;color:#aaa;font-size:8.4px">搜索</div>
<div class="bgrp" style="left:980.9px;top:53.5px;width:90.9px;height:21.4px">
<div class="bg1" style="left:-1px;width:25.5px"><svg width="9" height="9" viewBox="0 0 9 9" style="position:absolute;left:8.7px;top:4.9px"><rect x="0.6" y="0.6" width="7" height="7.6" fill="none" stroke="#4a4a4a" stroke-width="1.2"/><rect x="0" y="0" width="8.2" height="2.1" fill="#4a4a4a"/><rect x="2.6" y="4.1" width="3.2" height="1.2" fill="#4a4a4a"/><rect x="1.7" y="6.4" width="5" height="0.6" fill="#aaa"/></svg></div>
<div class="bg1" style="left:24.5px;width:32.5px"><svg width="8" height="8" viewBox="0 0 7.8 7.8" style="position:absolute;left:7.4px;top:5.6px"><rect x="0.0" y="0.0" width="2.2" height="2.2" fill="#444"/><rect x="0.0" y="2.8" width="2.2" height="2.2" fill="#444"/><rect x="0.0" y="5.6" width="2.2" height="2.2" fill="#444"/><rect x="2.8" y="0.0" width="2.2" height="2.2" fill="#444"/><rect x="2.8" y="2.8" width="2.2" height="2.2" fill="#444"/><rect x="2.8" y="5.6" width="2.2" height="2.2" fill="#444"/><rect x="5.6" y="0.0" width="2.2" height="2.2" fill="#444"/><rect x="5.6" y="2.8" width="2.2" height="2.2" fill="#444"/><rect x="5.6" y="5.6" width="2.2" height="2.2" fill="#444"/></svg><i class="caret" style="left:19.2px;top:9.8px"></i></div>
<div class="bg1" style="left:57px;width:32.5px;border-right:0"><svg width="9" height="9" viewBox="0 0 9 9" style="position:absolute;left:7px;top:5.1px"><rect x="0" y="7" width="8.8" height="1.7" fill="#444"/><path d="M3.6 0.3 L8 0.3 L8 4.7 L6.5 3.2 L4.2 5.8 L2.6 4.3 L5.1 1.8 Z" fill="#444"/><path d="M1.2 6.2 C1.2 4.6 2 3.6 3.4 3.1 L4.3 4.3 C3.2 4.6 2.8 5.2 2.8 6.2 Z" fill="#444"/></svg><i class="caret" style="left:18.8px;top:9.8px"></i></div>
</div>
<div class="bgrp" style="left:1074.5px;top:53.5px;width:25.5px;height:21.4px"><svg width="9" height="9" viewBox="0 0 10 10" style="position:absolute;left:7.4px;top:5px"><circle cx="4" cy="4" r="2.9" fill="none" stroke="#444" stroke-width="1.45"/><path d="M6.2 6.2 L8.7 8.7" stroke="#444" stroke-width="1.7" stroke-linecap="round"/></svg></div>
<table id="tb" style="left:9.80px;top:81.70px;width:1090.50px"><colgroup>
<col style="width:29.00px">
<col style="width:40.20px">
<col style="width:88.80px">
<col style="width:66.60px">
<col style="width:191.60px">
<col style="width:67.80px">
<col style="width:65.20px">
<col style="width:65.20px">
<col style="width:74.20px">
<col style="width:86.30px">
<col style="width:135.70px">
<col style="width:135.60px">
<col style="width:44.30px">
</colgroup><thead><tr>
<th><i class="cb"></i></th>
<th>Id</th>
<th>昵称</th>
<th>产品名称</th>
<th>订单编号</th>
<th>金额</th>
<th>实际收益</th>
<th>累计分红</th>
<th>状态</th>
<th>结束日期</th>
<th>创建时间</th>
<th>更新时间</th>
<th>操作</th>
</tr></thead><tbody>
<tr class=""><td><i class="cb"></i></td><td>86</td><td>183****4058</td><td>测试</td><td>LC202506101104509672cbdf8</td><td>99.00</td><td>-</td><td>-</td><td class="st"><i class="dot"></i>进行中</td><td>2026-01-01</td><td>2025-06-10 11:04:50</td><td>2025-06-10 11:04:50</td><td><span class="del"><svg width="6.99" height="8.90" viewBox="0 -1536 1408 1792" style="position:absolute;left:3.5px;top:3.0px"><rect x="256" y="-1024" width="896" height="1024" fill="#fff" fill-opacity="0.55"/><path fill="#fff" transform="scale(1,-1)" d="M512 160v704q0 14 -9 23t-23 9h-64q-14 0 -23 -9t-9 -23v-704q0 -14 9 -23t23 -9h64q14 0 23 9t9 23zM768 160v704q0 14 -9 23t-23 9h-64q-14 0 -23 -9t-9 -23v-704q0 -14 9 -23t23 -9h64q14 0 23 9t9 23zM1024 160v704q0 14 -9 23t-23 9h-64q-14 0 -23 -9t-9 -23v-704
q0 -14 9 -23t23 -9h64q14 0 23 9t9 23zM480 1152h448l-48 117q-7 9 -17 11h-317q-10 -2 -17 -11zM1408 1120v-64q0 -14 -9 -23t-23 -9h-96v-948q0 -83 -47 -143.5t-113 -60.5h-832q-66 0 -113 58.5t-47 141.5v952h-96q-14 0 -23 9t-9 23v64q0 14 9 23t23 9h309l70 167
q15 37 54 63t79 26h320q40 0 79 -26t54 -63l70 -167h309q14 0 23 -9t9 -23z"/></svg></span></td></tr>
<tr class="hov"><td><i class="cb"></i></td><td>85</td><td>183****4058</td><td>123123</td><td>LC202506101104325738a904c</td><td>1000.00</td><td>-</td><td>-</td><td class="st"><i class="dot"></i>进行中</td><td>2025-09-18</td><td>2025-06-10 11:04:32</td><td>2025-06-10 11:04:32</td><td><span class="del"><svg width="6.99" height="8.90" viewBox="0 -1536 1408 1792" style="position:absolute;left:3.5px;top:3.0px"><rect x="256" y="-1024" width="896" height="1024" fill="#fff" fill-opacity="0.55"/><path fill="#fff" transform="scale(1,-1)" d="M512 160v704q0 14 -9 23t-23 9h-64q-14 0 -23 -9t-9 -23v-704q0 -14 9 -23t23 -9h64q14 0 23 9t9 23zM768 160v704q0 14 -9 23t-23 9h-64q-14 0 -23 -9t-9 -23v-704q0 -14 9 -23t23 -9h64q14 0 23 9t9 23zM1024 160v704q0 14 -9 23t-23 9h-64q-14 0 -23 -9t-9 -23v-704
q0 -14 9 -23t23 -9h64q14 0 23 9t9 23zM480 1152h448l-48 117q-7 9 -17 11h-317q-10 -2 -17 -11zM1408 1120v-64q0 -14 -9 -23t-23 -9h-96v-948q0 -83 -47 -143.5t-113 -60.5h-832q-66 0 -113 58.5t-47 141.5v952h-96q-14 0 -23 9t-9 23v64q0 14 9 23t23 9h309l70 167
q15 37 54 63t79 26h320q40 0 79 -26t54 -63l70 -167h309q14 0 23 -9t9 -23z"/></svg></span></td></tr>
<tr class=""><td><i class="cb"></i></td><td>83</td><td>ceshi</td><td>-</td><td>LC202505251024094376f15a5</td><td>290.00</td><td>-</td><td>-</td><td class="st"><i class="dot"></i>进行中</td><td>2025-12-16</td><td>2025-05-25 10:24:09</td><td>2025-05-25 10:24:09</td><td><span class="del"><svg width="6.99" height="8.90" viewBox="0 -1536 1408 1792" style="position:absolute;left:3.5px;top:3.0px"><rect x="256" y="-1024" width="896" height="1024" fill="#fff" fill-opacity="0.55"/><path fill="#fff" transform="scale(1,-1)" d="M512 160v704q0 14 -9 23t-23 9h-64q-14 0 -23 -9t-9 -23v-704q0 -14 9 -23t23 -9h64q14 0 23 9t9 23zM768 160v704q0 14 -9 23t-23 9h-64q-14 0 -23 -9t-9 -23v-704q0 -14 9 -23t23 -9h64q14 0 23 9t9 23zM1024 160v704q0 14 -9 23t-23 9h-64q-14 0 -23 -9t-9 -23v-704
q0 -14 9 -23t23 -9h64q14 0 23 9t9 23zM480 1152h448l-48 117q-7 9 -17 11h-317q-10 -2 -17 -11zM1408 1120v-64q0 -14 -9 -23t-23 -9h-96v-948q0 -83 -47 -143.5t-113 -60.5h-832q-66 0 -113 58.5t-47 141.5v952h-96q-14 0 -23 9t-9 23v64q0 14 9 23t23 9h309l70 167
q15 37 54 63t79 26h320q40 0 79 -26t54 -63l70 -167h309q14 0 23 -9t9 -23z"/></svg></span></td></tr>
<tr class=""><td><i class="cb"></i></td><td>82</td><td>admin</td><td>-</td><td>LC202505151942456594d73b1</td><td>2000.00</td><td>-</td><td>-</td><td class="st"><i class="dot"></i>进行中</td><td>2025-08-23</td><td>2025-05-15 19:42:45</td><td>2025-05-15 19:42:45</td><td><span class="del"><svg width="6.99" height="8.90" viewBox="0 -1536 1408 1792" style="position:absolute;left:3.5px;top:3.0px"><rect x="256" y="-1024" width="896" height="1024" fill="#fff" fill-opacity="0.55"/><path fill="#fff" transform="scale(1,-1)" d="M512 160v704q0 14 -9 23t-23 9h-64q-14 0 -23 -9t-9 -23v-704q0 -14 9 -23t23 -9h64q14 0 23 9t9 23zM768 160v704q0 14 -9 23t-23 9h-64q-14 0 -23 -9t-9 -23v-704q0 -14 9 -23t23 -9h64q14 0 23 9t9 23zM1024 160v704q0 14 -9 23t-23 9h-64q-14 0 -23 -9t-9 -23v-704
q0 -14 9 -23t23 -9h64q14 0 23 9t9 23zM480 1152h448l-48 117q-7 9 -17 11h-317q-10 -2 -17 -11zM1408 1120v-64q0 -14 -9 -23t-23 -9h-96v-948q0 -83 -47 -143.5t-113 -60.5h-832q-66 0 -113 58.5t-47 141.5v952h-96q-14 0 -23 9t-9 23v64q0 14 9 23t23 9h309l70 167
q15 37 54 63t79 26h320q40 0 79 -26t54 -63l70 -167h309q14 0 23 -9t9 -23z"/></svg></span></td></tr>
<tr class=""><td><i class="cb"></i></td><td>81</td><td>admin</td><td>-</td><td>LC202505151942403429728b9</td><td>290.00</td><td>-</td><td>-</td><td class="st"><i class="dot"></i>进行中</td><td>2025-12-06</td><td>2025-05-15 19:42:40</td><td>2025-05-15 19:42:40</td><td><span class="del"><svg width="6.99" height="8.90" viewBox="0 -1536 1408 1792" style="position:absolute;left:3.5px;top:3.0px"><rect x="256" y="-1024" width="896" height="1024" fill="#fff" fill-opacity="0.55"/><path fill="#fff" transform="scale(1,-1)" d="M512 160v704q0 14 -9 23t-23 9h-64q-14 0 -23 -9t-9 -23v-704q0 -14 9 -23t23 -9h64q14 0 23 9t9 23zM768 160v704q0 14 -9 23t-23 9h-64q-14 0 -23 -9t-9 -23v-704q0 -14 9 -23t23 -9h64q14 0 23 9t9 23zM1024 160v704q0 14 -9 23t-23 9h-64q-14 0 -23 -9t-9 -23v-704
q0 -14 9 -23t23 -9h64q14 0 23 9t9 23zM480 1152h448l-48 117q-7 9 -17 11h-317q-10 -2 -17 -11zM1408 1120v-64q0 -14 -9 -23t-23 -9h-96v-948q0 -83 -47 -143.5t-113 -60.5h-832q-66 0 -113 58.5t-47 141.5v952h-96q-14 0 -23 9t-9 23v64q0 14 9 23t23 9h309l70 167
q15 37 54 63t79 26h320q40 0 79 -26t54 -63l70 -167h309q14 0 23 -9t9 -23z"/></svg></span></td></tr>
<tr class=""><td><i class="cb"></i></td><td>80</td><td>admin</td><td>-</td><td>LC202505151939528007d9666</td><td>290.00</td><td>-</td><td>-</td><td class="st"><i class="dot"></i>进行中</td><td>2025-12-06</td><td>2025-05-15 19:39:52</td><td>2025-05-15 19:39:52</td><td><span class="del"><svg width="6.99" height="8.90" viewBox="0 -1536 1408 1792" style="position:absolute;left:3.5px;top:3.0px"><rect x="256" y="-1024" width="896" height="1024" fill="#fff" fill-opacity="0.55"/><path fill="#fff" transform="scale(1,-1)" d="M512 160v704q0 14 -9 23t-23 9h-64q-14 0 -23 -9t-9 -23v-704q0 -14 9 -23t23 -9h64q14 0 23 9t9 23zM768 160v704q0 14 -9 23t-23 9h-64q-14 0 -23 -9t-9 -23v-704q0 -14 9 -23t23 -9h64q14 0 23 9t9 23zM1024 160v704q0 14 -9 23t-23 9h-64q-14 0 -23 -9t-9 -23v-704
q0 -14 9 -23t23 -9h64q14 0 23 9t9 23zM480 1152h448l-48 117q-7 9 -17 11h-317q-10 -2 -17 -11zM1408 1120v-64q0 -14 -9 -23t-23 -9h-96v-948q0 -83 -47 -143.5t-113 -60.5h-832q-66 0 -113 58.5t-47 141.5v952h-96q-14 0 -23 9t-9 23v64q0 14 9 23t23 9h309l70 167
q15 37 54 63t79 26h320q40 0 79 -26t54 -63l70 -167h309q14 0 23 -9t9 -23z"/></svg></span></td></tr>
<tr class=""><td><i class="cb"></i></td><td>79</td><td>ceshi</td><td>-</td><td>LC20250514214932689676b9b</td><td>290.00</td><td>-</td><td>-</td><td class="st"><i class="dot"></i>进行中</td><td>2025-12-05</td><td>2025-05-14 21:49:32</td><td>2025-05-14 21:49:32</td><td><span class="del"><svg width="6.99" height="8.90" viewBox="0 -1536 1408 1792" style="position:absolute;left:3.5px;top:3.0px"><rect x="256" y="-1024" width="896" height="1024" fill="#fff" fill-opacity="0.55"/><path fill="#fff" transform="scale(1,-1)" d="M512 160v704q0 14 -9 23t-23 9h-64q-14 0 -23 -9t-9 -23v-704q0 -14 9 -23t23 -9h64q14 0 23 9t9 23zM768 160v704q0 14 -9 23t-23 9h-64q-14 0 -23 -9t-9 -23v-704q0 -14 9 -23t23 -9h64q14 0 23 9t9 23zM1024 160v704q0 14 -9 23t-23 9h-64q-14 0 -23 -9t-9 -23v-704
q0 -14 9 -23t23 -9h64q14 0 23 9t9 23zM480 1152h448l-48 117q-7 9 -17 11h-317q-10 -2 -17 -11zM1408 1120v-64q0 -14 -9 -23t-23 -9h-96v-948q0 -83 -47 -143.5t-113 -60.5h-832q-66 0 -113 58.5t-47 141.5v952h-96q-14 0 -23 9t-9 23v64q0 14 9 23t23 9h309l70 167
q15 37 54 63t79 26h320q40 0 79 -26t54 -63l70 -167h309q14 0 23 -9t9 -23z"/></svg></span></td></tr>
<tr class=""><td><i class="cb"></i></td><td>78</td><td>ceshi</td><td>-</td><td>LC202505132154408431d12b5</td><td>290.00</td><td>-</td><td>-</td><td class="st"><i class="dot"></i>进行中</td><td>2025-12-04</td><td>2025-05-13 21:54:40</td><td>2025-05-13 21:54:40</td><td><span class="del"><svg width="6.99" height="8.90" viewBox="0 -1536 1408 1792" style="position:absolute;left:3.5px;top:3.0px"><rect x="256" y="-1024" width="896" height="1024" fill="#fff" fill-opacity="0.55"/><path fill="#fff" transform="scale(1,-1)" d="M512 160v704q0 14 -9 23t-23 9h-64q-14 0 -23 -9t-9 -23v-704q0 -14 9 -23t23 -9h64q14 0 23 9t9 23zM768 160v704q0 14 -9 23t-23 9h-64q-14 0 -23 -9t-9 -23v-704q0 -14 9 -23t23 -9h64q14 0 23 9t9 23zM1024 160v704q0 14 -9 23t-23 9h-64q-14 0 -23 -9t-9 -23v-704
q0 -14 9 -23t23 -9h64q14 0 23 9t9 23zM480 1152h448l-48 117q-7 9 -17 11h-317q-10 -2 -17 -11zM1408 1120v-64q0 -14 -9 -23t-23 -9h-96v-948q0 -83 -47 -143.5t-113 -60.5h-832q-66 0 -113 58.5t-47 141.5v952h-96q-14 0 -23 9t-9 23v64q0 14 9 23t23 9h309l70 167
q15 37 54 63t79 26h320q40 0 79 -26t54 -63l70 -167h309q14 0 23 -9t9 -23z"/></svg></span></td></tr>
<tr class=""><td><i class="cb"></i></td><td>77</td><td>ceshi</td><td>-</td><td>LC2025051321533856236270b</td><td>290.00</td><td>-</td><td>-</td><td class="st"><i class="dot"></i>进行中</td><td>2025-12-04</td><td>2025-05-13 21:53:38</td><td>2025-05-13 21:53:38</td><td><span class="del"><svg width="6.99" height="8.90" viewBox="0 -1536 1408 1792" style="position:absolute;left:3.5px;top:3.0px"><rect x="256" y="-1024" width="896" height="1024" fill="#fff" fill-opacity="0.55"/><path fill="#fff" transform="scale(1,-1)" d="M512 160v704q0 14 -9 23t-23 9h-64q-14 0 -23 -9t-9 -23v-704q0 -14 9 -23t23 -9h64q14 0 23 9t9 23zM768 160v704q0 14 -9 23t-23 9h-64q-14 0 -23 -9t-9 -23v-704q0 -14 9 -23t23 -9h64q14 0 23 9t9 23zM1024 160v704q0 14 -9 23t-23 9h-64q-14 0 -23 -9t-9 -23v-704
q0 -14 9 -23t23 -9h64q14 0 23 9t9 23zM480 1152h448l-48 117q-7 9 -17 11h-317q-10 -2 -17 -11zM1408 1120v-64q0 -14 -9 -23t-23 -9h-96v-948q0 -83 -47 -143.5t-113 -60.5h-832q-66 0 -113 58.5t-47 141.5v952h-96q-14 0 -23 9t-9 23v64q0 14 9 23t23 9h309l70 167
q15 37 54 63t79 26h320q40 0 79 -26t54 -63l70 -167h309q14 0 23 -9t9 -23z"/></svg></span></td></tr>
<tr class=""><td><i class="cb"></i></td><td>76</td><td>ceshi</td><td>-</td><td>LC202505132153218453a94bd</td><td>290.00</td><td>-</td><td>-</td><td class="st"><i class="dot"></i>进行中</td><td>2025-12-04</td><td>2025-05-13 21:53:21</td><td>2025-05-13 21:53:21</td><td><span class="del"><svg width="6.99" height="8.90" viewBox="0 -1536 1408 1792" style="position:absolute;left:3.5px;top:3.0px"><rect x="256" y="-1024" width="896" height="1024" fill="#fff" fill-opacity="0.55"/><path fill="#fff" transform="scale(1,-1)" d="M512 160v704q0 14 -9 23t-23 9h-64q-14 0 -23 -9t-9 -23v-704q0 -14 9 -23t23 -9h64q14 0 23 9t9 23zM768 160v704q0 14 -9 23t-23 9h-64q-14 0 -23 -9t-9 -23v-704q0 -14 9 -23t23 -9h64q14 0 23 9t9 23zM1024 160v704q0 14 -9 23t-23 9h-64q-14 0 -23 -9t-9 -23v-704
q0 -14 9 -23t23 -9h64q14 0 23 9t9 23zM480 1152h448l-48 117q-7 9 -17 11h-317q-10 -2 -17 -11zM1408 1120v-64q0 -14 -9 -23t-23 -9h-96v-948q0 -83 -47 -143.5t-113 -60.5h-832q-66 0 -113 58.5t-47 141.5v952h-96q-14 0 -23 9t-9 23v64q0 14 9 23t23 9h309l70 167
q15 37 54 63t79 26h320q40 0 79 -26t54 -63l70 -167h309q14 0 23 -9t9 -23z"/></svg></span></td></tr>
</tbody></table>
<div style="position:absolute;left:10.2px;top:431.5px;line-height:13px;white-space:nowrap;font-size:9.16px;word-spacing:0.15px">显示第 1 到第 10 条记录，总共 40 条记录 每页显示</div>
<div class="bgrp" style="left:221.5px;top:427.1px;width:34px;height:21.5px"><span style="position:absolute;left:8.3px;top:4.4px;line-height:13px">10</span><i class="caret up" style="left:20.5px;top:8.9px"></i></div>
<div style="position:absolute;left:259px;top:431.5px;line-height:13px;white-space:nowrap;font-size:9.16px">条记录</div>
<div class="pg" style="left:854.0px;width:43.5px">上一页</div>
<div class="pg act" style="left:897.5px;width:22.0px">1</div>
<div class="pg" style="left:919.5px;width:21.0px">2</div>
<div class="pg" style="left:940.5px;width:21.6px">3</div>
<div class="pg" style="left:962.1px;width:20.6px">4</div>
<div class="pg" style="left:982.7px;width:45.3px">下一页</div>
<div class="inp" style="left:1029.8px;top:426.3px;width:32.8px;height:22.2px"></div>
<div class="bgrp" style="left:1066px;top:426.3px;width:34px;height:22.2px;text-align:center;line-height:20.4px;color:#555">跳转</div>
</div>
</div>
</body>
</html>
